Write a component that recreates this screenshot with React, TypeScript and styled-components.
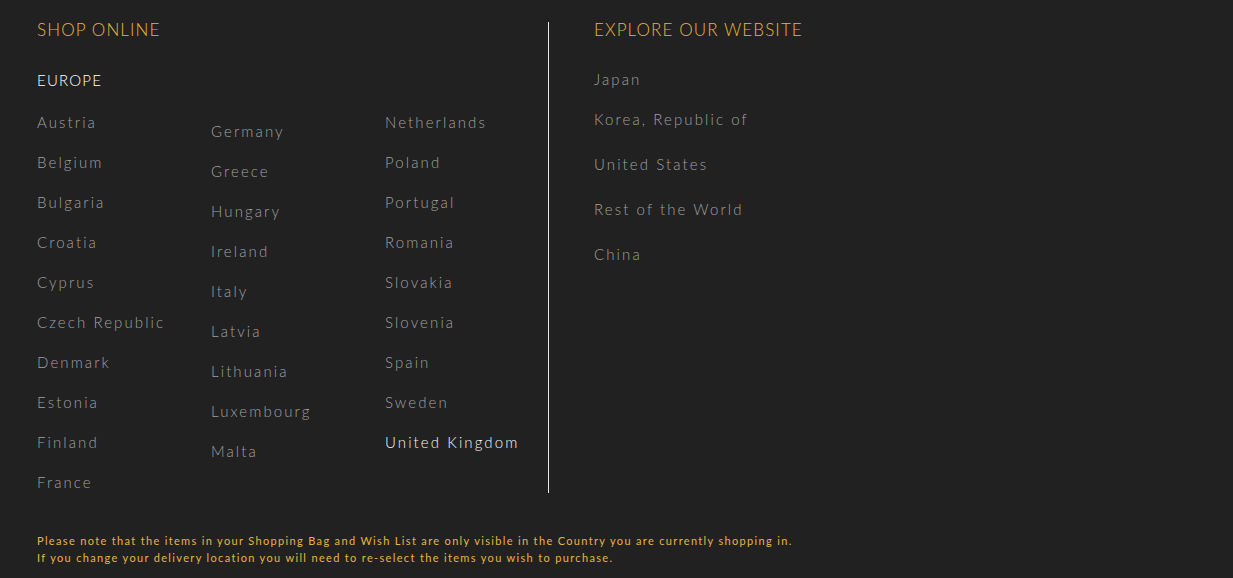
import React from 'react'
import styled, { createGlobalStyle } from 'styled-components'

const GlobalStyle = createGlobalStyle`
  html, body {
    margin: 0;
    padding: 0;
    background: #212121;
  }
  body {
    font-family: Lato, "Open Sans", sans-serif;
  }
`

const gold = '#e8b441'

const StyledPage = styled.div`
  min-height: 578px;
  box-sizing: border-box;
  padding: 22px 0 12px 37px;
  background: #212121;
`

const StyledMain = styled.div`
  display: flex;
  align-items: flex-start;
`

const StyledShop = styled.section`
  width: 512px;
  box-sizing: border-box;
  border-right: 1px solid #e6e6e6;
  padding-bottom: 1px;
`

const StyledExplore = styled.section`
  padding-left: 45px;
`

const StyledHeading = styled.h2`
  margin: 0;
  font-size: 17px;
  line-height: 16px;
  font-weight: 300;
  letter-spacing: 1.1px;
  color: ${gold};
`

const StyledRegion = styled.h3`
  margin: 32px 0 22px;
  font-size: 15px;
  line-height: 20px;
  font-weight: 300;
  letter-spacing: 1.2px;
  color: #ffffff;
`

const StyledColumns = styled.div`
  display: grid;
  grid-template-columns: 174px 174px 1fr;
`

const StyledList = styled.ul<{ $offset?: number }>`
  list-style: none;
  margin: 0;
  padding: ${(p) => p.$offset ?? 0}px 0 0;
  display: flex;
  flex-direction: column;
  gap: 20px;
`

const StyledCountry = styled.li<{ $active?: boolean }>`
  font-size: 15px;
  line-height: 20px;
  font-weight: 300;
  letter-spacing: 2.1px;
  color: ${(p) => (p.$active ? '#f6f6f6' : '#a0a0a0')};
  white-space: nowrap;
`

const StyledSiteList = styled.ul`
  list-style: none;
  margin: 31px 0 0;
  padding: 0;
`

const StyledSite = styled.li<{ $gap: number }>`
  font-size: 15px;
  line-height: 20px;
  font-weight: 300;
  letter-spacing: 2.1px;
  color: #a0a0a0;
  margin-bottom: ${(p) => p.$gap}px;
`

const StyledNote = styled.p`
  margin: 39px 0 0;
  font-size: 11px;
  line-height: 17px;
  letter-spacing: 1.34px;
  color: ${gold};
`

const columns = [
  { offset: 0, items: ['Austria', 'Belgium', 'Bulgaria', 'Croatia', 'Cyprus', 'Czech Republic', 'Denmark', 'Estonia', 'Finland', 'France'] },
  { offset: 9, items: ['Germany', 'Greece', 'Hungary', 'Ireland', 'Italy', 'Latvia', 'Lithuania', 'Luxembourg', 'Malta'] },
  { offset: 0, items: ['Netherlands', 'Poland', 'Portugal', 'Romania', 'Slovakia', 'Slovenia', 'Spain', 'Sweden', 'United Kingdom'] },
]

const sites = [
  { name: 'Japan', gap: 20 },
  { name: 'Korea, Republic of', gap: 25 },
  { name: 'United States', gap: 25 },
  { name: 'Rest of the World', gap: 25 },
  { name: 'China', gap: 0 },
]

export default function App() {
  return (
    <>
      <GlobalStyle />
      <StyledPage>
        <StyledMain>
          <StyledShop>
            <StyledHeading>SHOP ONLINE</StyledHeading>
            <StyledRegion>EUROPE</StyledRegion>
            <StyledColumns>
              {columns.map((col, i) => (
                <StyledList key={i} $offset={col.offset}>
                  {col.items.map((c) => (
                    <StyledCountry key={c} $active={c === 'United Kingdom'}>
                      {c}
                    </StyledCountry>
                  ))}
                </StyledList>
              ))}
            </StyledColumns>
          </StyledShop>
          <StyledExplore>
            <StyledHeading>EXPLORE OUR WEBSITE</StyledHeading>
            <StyledSiteList>
              {sites.map((s) => (
                <StyledSite key={s.name} $gap={s.gap}>
                  {s.name}
                </StyledSite>
              ))}
            </StyledSiteList>
          </StyledExplore>
        </StyledMain>
        <StyledNote>
          Please note that the items in your Shopping Bag and Wish List are only visible in the Country you are currently shopping in.
          <br />
          If you change your delivery location you will need to re-select the items you wish to purchase.
        </StyledNote>
      </StyledPage>
    </>
  )
}
